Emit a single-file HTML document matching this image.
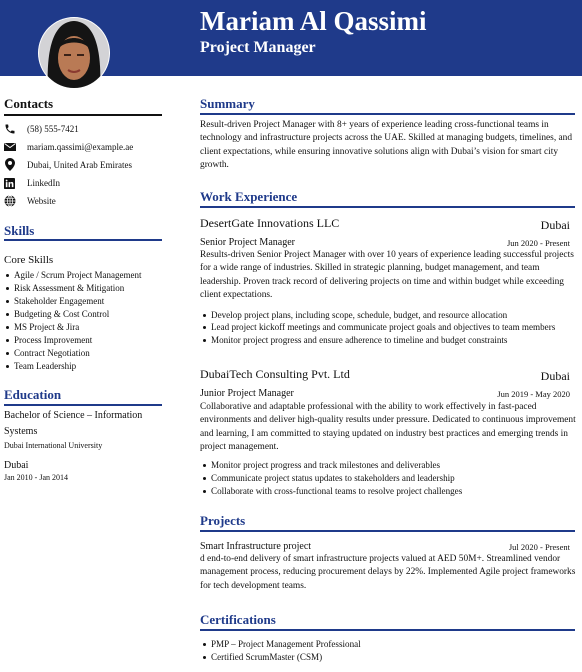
<!DOCTYPE html>
<html><head><style>
*{margin:0;padding:0;box-sizing:border-box}
body{width:582px;height:672px;background:#fff;position:relative;overflow:hidden;font-family:"Liberation Serif",serif;color:#111}
.a{position:absolute;white-space:nowrap}
.hdr{position:absolute;left:0;top:0;width:582px;height:76px;background:#1f3a8a}
.s{font-size:9px;line-height:12px}
.h{font-size:13px;font-weight:bold;color:#1f3a8a;line-height:16px}
.rule{position:absolute;height:2px;background:#1f3a8a}
.bl{position:absolute;font-size:9px;line-height:12px;white-space:nowrap}
.bl::before{content:"";position:absolute;left:-8px;top:5px;width:3px;height:3px;border-radius:50%;background:#111}
.r .bl{font-size:9.1px}
.p{position:absolute;left:200px;width:382px;font-size:9.4px;line-height:13.3px}
.ic{position:absolute;left:4px}
</style></head><body>
<div class="hdr"></div>
<div class="a" style="left:200px;top:5px;font-size:27px;font-weight:bold;color:#fff;line-height:32px">Mariam Al Qassimi</div>
<div class="a" style="left:200px;top:38px;font-size:16px;font-weight:bold;color:#fff;line-height:19px">Project Manager</div>
<svg class="a" style="left:38px;top:16px" width="74" height="76" viewBox="0 0 74 76">
<defs><clipPath id="c"><circle cx="36" cy="37" r="35"/></clipPath></defs>
<circle cx="36" cy="37" r="36" fill="#fff"/>
<g clip-path="url(#c)">
<rect width="74" height="76" fill="#d3d3d6"/>
<path d="M10 76 C8 36 14 6 36 5 C58 6 64 36 62 76Z" fill="#141414"/>
<ellipse cx="36" cy="42" rx="16" ry="22" fill="#b97a55"/>
<path d="M20 34 C22 18 50 18 52 34 C48 24 24 24 20 34Z" fill="#141414"/>
<rect x="26" y="38" width="7" height="2" fill="#3a2218"/><rect x="39" y="38" width="7" height="2" fill="#3a2218"/>
<path d="M30 54 Q36 58 42 54" stroke="#8a3a30" stroke-width="2" fill="none"/>
</g></svg>

<div class="a" style="left:4px;top:96px;font-size:13px;font-weight:bold;line-height:16px">Contacts</div>
<div class="rule" style="left:4px;top:114px;width:158px;background:#111"></div>
<svg class="ic" style="top:123px" width="12" height="12" viewBox="0 0 24 24"><path d="M20 15.5c-1.2 0-2.4-.2-3.6-.6-.3-.1-.7 0-1 .2l-2.2 2.2c-2.8-1.4-5.1-3.8-6.6-6.6l2.2-2.2c.3-.3.4-.7.2-1C8.7 6.4 8.5 5.2 8.5 4c0-.6-.4-1-1-1H4c-.6 0-1 .4-1 1 0 9.4 7.6 17 17 17 .6 0 1-.4 1-1v-3.5c0-.6-.4-1-1-1z" fill="#111"/></svg>
<div class="a s" style="left:27px;top:123px">(58) 555-7421</div>
<svg class="ic" style="top:142px" width="12" height="10" viewBox="0 0 24 20"><path d="M0 2h24v16H0z" fill="#111"/><path d="M1 3l11 8 11-8" stroke="#fff" stroke-width="2" fill="none"/></svg>
<div class="a s" style="left:27px;top:141px">mariam.qassimi@example.ae</div>
<svg class="ic" style="left:5px;top:158px" width="10" height="13" viewBox="0 0 20 26"><path d="M10 0C4.5 0 0 4.5 0 10c0 7 10 16 10 16s10-9 10-16C20 4.5 15.5 0 10 0zm0 14a4 4 0 110-8 4 4 0 010 8z" fill="#111"/></svg>
<div class="a s" style="left:27px;top:159px">Dubai, United Arab Emirates</div>
<svg class="ic" style="top:178px" width="11" height="11" viewBox="0 0 24 24"><rect width="24" height="24" rx="2" fill="#111"/><rect x="4" y="9" width="3.5" height="11" fill="#fff"/><circle cx="5.7" cy="5.5" r="2" fill="#fff"/><path d="M10 9h3.3v1.6c.6-1 1.8-1.9 3.6-1.9 3 0 3.6 2 3.6 4.6V20H17v-5.6c0-1.3 0-2.9-1.8-2.9s-2 1.4-2 2.8V20H10z" fill="#fff"/></svg>
<div class="a s" style="left:27px;top:177px">LinkedIn</div>
<svg class="ic" style="top:195px" width="12" height="12" viewBox="0 0 24 24"><circle cx="12" cy="12" r="11" fill="#111"/><path d="M1 12h22M12 1v22M3 6.5h18M3 17.5h18" stroke="#fff" stroke-width="1.5"/><ellipse cx="12" cy="12" rx="5" ry="11" stroke="#fff" stroke-width="1.5" fill="none"/></svg>
<div class="a s" style="left:27px;top:195px">Website</div>

<div class="a h" style="left:4px;top:223px">Skills</div>
<div class="rule" style="left:4px;top:239px;width:158px"></div>
<div class="a" style="left:4px;top:253px;font-size:11px;line-height:14px">Core Skills</div>
<div class="bl" style="left:14px;top:269px">Agile / Scrum Project Management</div>
<div class="bl" style="left:14px;top:282px">Risk Assessment &amp; Mitigation</div>
<div class="bl" style="left:14px;top:295px">Stakeholder Engagement</div>
<div class="bl" style="left:14px;top:308px">Budgeting &amp; Cost Control</div>
<div class="bl" style="left:14px;top:321px">MS Project &amp; Jira</div>
<div class="bl" style="left:14px;top:334px">Process Improvement</div>
<div class="bl" style="left:14px;top:347px">Contract Negotiation</div>
<div class="bl" style="left:14px;top:360px">Team Leadership</div>

<div class="a h" style="left:4px;top:387px">Education</div>
<div class="rule" style="left:4px;top:404px;width:158px"></div>
<div class="a" style="left:4px;top:409px;font-size:10px;line-height:14px">Bachelor of Science – Information</div>
<div class="a" style="left:4px;top:425px;font-size:10px;line-height:14px">Systems</div>
<div class="a" style="left:4px;top:440px;font-size:8px;line-height:12px">Dubai International University</div>
<div class="a" style="left:4px;top:459px;font-size:10px;line-height:14px">Dubai</div>
<div class="a" style="left:4px;top:472px;font-size:8px;line-height:12px">Jan 2010 - Jan 2014</div>

<div class="r">
<div class="a h" style="left:200px;top:96px">Summary</div>
<div class="rule" style="left:200px;top:113px;width:375px"></div>
<div class="p" style="top:119px">Result-driven Project Manager with 8+ years of experience leading cross-functional teams in technology and infrastructure projects across the UAE. Skilled at managing budgets, timelines, and client expectations, while ensuring innovative solutions align with Dubai’s vision for smart city growth.</div>

<div class="a h" style="left:200px;top:189px">Work Experience</div>
<div class="rule" style="left:200px;top:206px;width:375px"></div>
<div class="a" style="left:200px;top:216px;font-size:12px;line-height:15px">DesertGate Innovations LLC</div>
<div class="a" style="right:12px;top:218px;font-size:12px;line-height:15px">Dubai</div>
<div class="a" style="left:200px;top:236px;font-size:10px;line-height:13px">Senior Project Manager</div>
<div class="a" style="right:12px;top:237px;font-size:8.5px;line-height:12px">Jun 2020 - Present</div>
<div class="p" style="top:249px">Results-driven Senior Project Manager with over 10 years of experience leading successful projects for a wide range of industries. Skilled in strategic planning, budget management, and team leadership. Proven track record of delivering projects on time and within budget while exceeding client expectations.</div>
<div class="bl" style="left:211px;top:309px">Develop project plans, including scope, schedule, budget, and resource allocation</div>
<div class="bl" style="left:211px;top:321px">Lead project kickoff meetings and communicate project goals and objectives to team members</div>
<div class="bl" style="left:211px;top:334px">Monitor project progress and ensure adherence to timeline and budget constraints</div>

<div class="a" style="left:200px;top:367px;font-size:12px;line-height:15px">DubaiTech Consulting Pvt. Ltd</div>
<div class="a" style="right:12px;top:369px;font-size:12px;line-height:15px">Dubai</div>
<div class="a" style="left:200px;top:387px;font-size:10px;line-height:13px">Junior Project Manager</div>
<div class="a" style="right:12px;top:388px;font-size:8.5px;line-height:12px">Jun 2019 - May 2020</div>
<div class="p" style="top:401px">Collaborative and adaptable professional with the ability to work effectively in fast-paced environments and deliver high-quality results under pressure. Dedicated to continuous improvement and learning, I am committed to staying updated on industry best practices and emerging trends in project management.</div>
<div class="bl" style="left:211px;top:459px">Monitor project progress and track milestones and deliverables</div>
<div class="bl" style="left:211px;top:472px">Communicate project status updates to stakeholders and leadership</div>
<div class="bl" style="left:211px;top:485px">Collaborate with cross-functional teams to resolve project challenges</div>

<div class="a h" style="left:200px;top:513px">Projects</div>
<div class="rule" style="left:200px;top:530px;width:375px"></div>
<div class="a" style="left:200px;top:540px;font-size:10px;line-height:13px">Smart Infrastructure project</div>
<div class="a" style="right:12px;top:541px;font-size:8.5px;line-height:12px">Jul 2020 - Present</div>
<div class="p" style="top:553px">d end-to-end delivery of smart infrastructure projects valued at AED 50M+. Streamlined vendor management process, reducing procurement delays by 22%. Implemented Agile project frameworks for tech development teams.</div>

<div class="a h" style="left:200px;top:612px">Certifications</div>
<div class="rule" style="left:200px;top:629px;width:375px"></div>
<div class="bl" style="left:211px;top:638px">PMP – Project Management Professional</div>
<div class="bl" style="left:211px;top:651px">Certified ScrumMaster (CSM)</div>
</div>
</body></html>
